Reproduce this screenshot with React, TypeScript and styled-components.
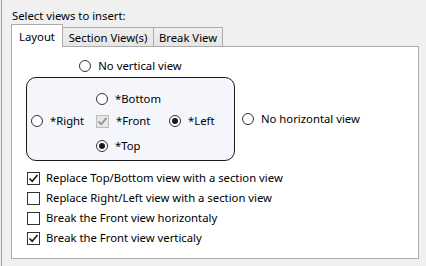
import React from "react";
import styled, { createGlobalStyle } from "styled-components";

const Global = createGlobalStyle`
  html, body { margin: 0; padding: 0; background: #f0f0f0; }
  body { font-family: "Noto Sans", "Open Sans", sans-serif; font-size: 11.3px; color: #000; }
`;

const Frame = styled.div`
  margin-left: 1px;
  height: 266px;
  border-left: 1px solid #a0a0a0;
  padding-left: 9px;
  padding-right: 7px;
  box-sizing: border-box;
  display: flex;
  flex-direction: column;
`;

const Caption = styled.div`
  padding: 8px 0 0 1px;
  height: 16px;
  line-height: 16px;
`;

const TabStrip = styled.div`
  display: flex;
  align-items: flex-end;
  margin-bottom: -1px;
  position: relative;
  z-index: 1;
`;

const Tab = styled.div<{ $active?: boolean; $w: number }>`
  box-sizing: border-box;
  width: ${(p) => p.$w}px;
  height: ${(p) => (p.$active ? 23 : 19)}px;
  margin-bottom: ${(p) => (p.$active ? 0 : 1)}px;
  margin-left: ${(p) => (p.$active ? 0 : -1)}px;
  border: 1px solid #acacac;
  border-bottom: none;
  background: ${(p) => (p.$active ? "#fff" : "linear-gradient(#f0f0f0, #e5e5e5)")};
  display: flex;
  align-items: center;
  justify-content: center;
  white-space: nowrap;
`;

const Panel = styled.div`
  box-sizing: border-box;
  width: 408px;
  height: 213px;
  background: #fff;
  border: 1px solid #acacac;
  display: flex;
  flex-direction: column;
`;

const Diagram = styled.div`
  display: flex;
  flex-direction: column;
  padding: 12px 0 0 14px;
`;

const TopChoice = styled.div`
  width: 209px;
  display: flex;
  justify-content: center;
  height: 14px;
`;

const MiddleRow = styled.div`
  display: flex;
  align-items: center;
  margin-top: 4px;
  gap: 7px;
`;

const Box = styled.div`
  box-sizing: border-box;
  width: 209px;
  height: 84px;
  border: 1px solid #1a1a1a;
  border-radius: 10px;
  background: #f4f6fc;
  display: grid;
  grid-template-columns: 65px 73px auto;
  grid-template-rows: 22px 22px 26px;
  padding: 10px 0 0 4px;
`;

const Cell = styled.div<{ $col: number; $row: number }>`
  grid-column: ${(p) => p.$col};
  grid-row: ${(p) => p.$row};
  display: flex;
  align-items: ${(p) => (p.$row === 3 ? "flex-end" : "center")};
  padding-bottom: ${(p) => (p.$row === 3 ? 5 : 0)}px;
`;

const Option = styled.label<{ $gap?: number }>`
  display: flex;
  align-items: center;
  gap: ${(p) => p.$gap ?? 7}px;
  white-space: nowrap;
  line-height: 14px;
`;

const RadioCircle = styled.span<{ $checked?: boolean }>`
  box-sizing: border-box;
  width: 12px;
  height: 12px;
  border-radius: 50%;
  border: 1px solid #333;
  background: #fff;
  display: flex;
  align-items: center;
  justify-content: center;
  flex: none;
  &::after {
    content: "";
    display: ${(p) => (p.$checked ? "block" : "none")};
    width: 6px;
    height: 6px;
    border-radius: 50%;
    background: #1a1a1a;
  }
`;

const CheckSquare = styled.span<{ $disabled?: boolean }>`
  box-sizing: border-box;
  width: 13px;
  height: 13px;
  border: 1px solid ${(p) => (p.$disabled ? "#bcbcbc" : "#333")};
  background: ${(p) => (p.$disabled ? "#e6e6e6" : "#fff")};
  display: flex;
  align-items: center;
  justify-content: center;
  flex: none;
`;

const Checks = styled.div`
  display: flex;
  flex-direction: column;
  padding: 7px 0 0 15px;
`;

const CheckRow = styled.div`
  height: 20px;
  display: flex;
  align-items: center;
`;

const Mark = ({ color }: { color: string }) => (
  <svg width="11" height="11" viewBox="0 0 11 11">
    <path d="M1.5 5.5 L4.2 8.3 L9.5 2" fill="none" stroke={color} strokeWidth="1.6" />
  </svg>
);

const Radio = ({ label, checked }: { label: string; checked?: boolean }) => (
  <Option>
    <RadioCircle $checked={checked} />
    <span>{label}</span>
  </Option>
);

const Check = ({ label, checked, disabled, gap }: { label: string; checked?: boolean; disabled?: boolean; gap?: number }) => (
  <Option $gap={gap}>
    <CheckSquare $disabled={disabled}>{checked && <Mark color={disabled ? "#8a8a8a" : "#1a1a1a"} />}</CheckSquare>
    <span>{label}</span>
  </Option>
);

export default function App() {
  return (
    <>
      <Global />
      <Frame>
        <Caption>Select views to insert:</Caption>
        <TabStrip>
          <Tab $active $w={52}>Layout</Tab>
          <Tab $w={92}>Section View(s)</Tab>
          <Tab $w={70}>Break View</Tab>
        </TabStrip>
        <Panel>
          <Diagram>
            <TopChoice>
              <Radio label="No vertical view" />
            </TopChoice>
            <MiddleRow>
              <Box>
                <Cell $col={2} $row={1}>
                  <Radio label="*Bottom" />
                </Cell>
                <Cell $col={1} $row={2}>
                  <Radio label="*Right" />
                </Cell>
                <Cell $col={2} $row={2}>
                  <Check label="*Front" checked disabled />
                </Cell>
                <Cell $col={3} $row={2}>
                  <Radio label="*Left" checked />
                </Cell>
                <Cell $col={2} $row={3}>
                  <Radio label="*Top" checked />
                </Cell>
              </Box>
              <Radio label="No horizontal view" />
            </MiddleRow>
          </Diagram>
          <Checks>
            <CheckRow><Check gap={6} label="Replace Top/Bottom view with a section view" checked /></CheckRow>
            <CheckRow><Check gap={6} label="Replace Right/Left view with a section view" /></CheckRow>
            <CheckRow><Check gap={6} label="Break the Front view horizontaly" /></CheckRow>
            <CheckRow><Check gap={6} label="Break the Front view verticaly" checked /></CheckRow>
          </Checks>
        </Panel>
      </Frame>
    </>
  );
}
